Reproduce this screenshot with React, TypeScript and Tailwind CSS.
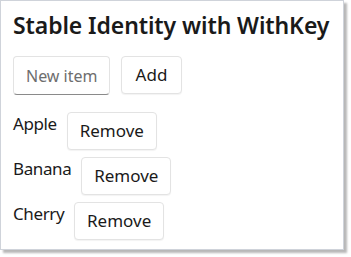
import React, { useState } from 'react';

type Item = { id: number; name: string };

export default function App() {
  const [items, setItems] = useState<Item[]>([
    { id: 1, name: 'Apple' },
    { id: 2, name: 'Banana' },
    { id: 3, name: 'Cherry' },
  ]);
  const [text, setText] = useState('');

  const add = () => {
    if (!text.trim()) return;
    setItems([...items, { id: Date.now(), name: text.trim() }]);
    setText('');
  };

  return (
    <div className="w-[351px] h-[257px] bg-white" style={{ fontFamily: '"Noto Sans", "Open Sans", sans-serif' }}>
      <div className="w-[344px] h-[250px] border border-[#cfd3da] bg-white shadow-[3px_3px_2px_rgba(0,0,0,0.28)] pl-3 pt-[8px]">
        <h1 className="text-[23px] font-semibold text-[#1a1a1a] leading-[32px] tracking-[-0.1px] whitespace-nowrap">
          Stable Identity with WithKey
        </h1>
        <div className="flex gap-[11px] mt-[15px]">
          <input
            value={text}
            onChange={(e) => setText(e.target.value)}
            placeholder="New item"
            className="w-[97px] h-[39px] pl-[12px] pr-[4px] text-[16px] text-[#1a1a1a] placeholder:text-[#6e6e6e] border border-[#e3e3e3] border-b-[#8a8a8a] rounded-[4px] outline-none"
          />
          <button
            onClick={add}
            className="w-[61px] h-[38px] text-[17px] text-[#1a1a1a] bg-white border border-[#e3e3e3] rounded-[4px] shadow-[0_1px_1px_rgba(0,0,0,0.05)]"
          >
            Add
          </button>
        </div>
        <div className="flex flex-col gap-[7px] mt-[17px]">
          {items.map((item) => (
            <div key={item.id} className="flex items-start gap-[10px]">
              <span className="text-[17px] leading-[24px] tracking-[-0.4px] text-[#1a1a1a]">{item.name}</span>
              <button
                onClick={() => setItems(items.filter((i) => i.id !== item.id))}
                className="w-[90px] h-[38px] text-[17px] text-[#1a1a1a] bg-white border border-[#e3e3e3] rounded-[4px] shadow-[0_1px_1px_rgba(0,0,0,0.05)]"
              >
                Remove
              </button>
            </div>
          ))}
        </div>
      </div>
    </div>
  );
}
